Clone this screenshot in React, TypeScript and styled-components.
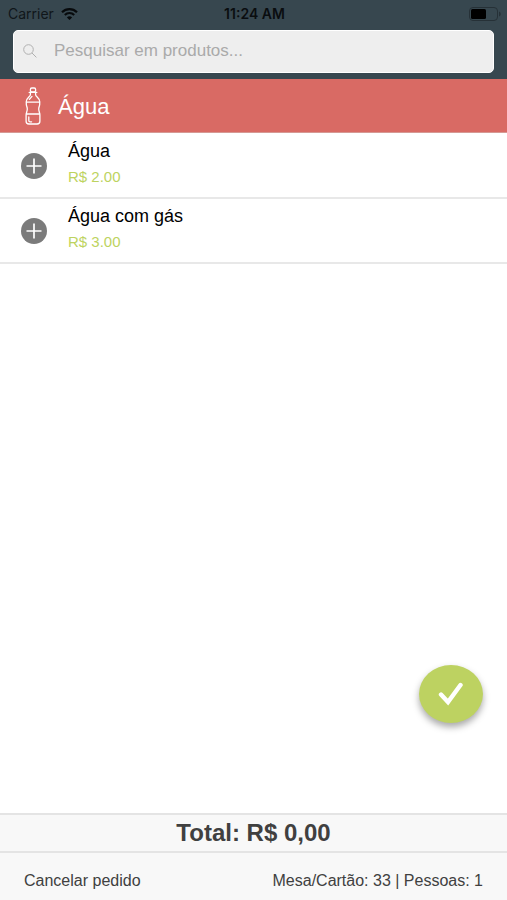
import React from "react";
import styled, { createGlobalStyle } from "styled-components";

const GlobalStyle = createGlobalStyle`
  *, *::before, *::after { box-sizing: border-box; }
  body {
    margin: 0;
    background: #fff;
    font-family: "Liberation Sans", Arial, sans-serif;
    color: #000;
  }
  button, input { font: inherit; }
`;

const Screen = styled.div`
  display: flex;
  flex-direction: column;
  min-height: 100vh;
`;

const TopBar = styled.header`
  background: #37474f;
  padding-bottom: 6px;
`;

const StatusBar = styled.div`
  display: grid;
  grid-template-columns: 1fr auto 1fr;
  align-items: center;
  height: 30px;
  padding: 0 6px 2px 8px;
  font: 400 14px/28px Inter, sans-serif;
  color: #10161a;
`;

const Carrier = styled.div`
  display: flex;
  align-items: center;
  gap: 7px;
`;

const Clock = styled.time`
  font-weight: 600;
  color: #0a0d0f;
`;

const Battery = styled.svg`
  display: block;
  justify-self: end;
`;

const SearchField = styled.label`
  display: flex;
  align-items: center;
  gap: 16px;
  height: 43px;
  margin: 0 13px;
  padding: 0 9px;
  border: 1px solid #fff;
  border-radius: 5px;
  background: #eee;
`;

const SearchInput = styled.input`
  flex: 1;
  min-width: 0;
  padding: 0 0 2px;
  border: 0;
  outline: 0;
  background: transparent;
  font-size: 17px;
  color: #333;
  &::placeholder { color: #aaa; opacity: 1; }
`;

const CategoryBar = styled.div`
  display: flex;
  align-items: center;
  gap: 16px;
  height: 54px;
  padding: 0 24px;
  background: #d96a64;
  border-bottom: 1px solid #d59994;
  color: #fff;
`;

const CategoryTitle = styled.h1`
  margin: 0;
  padding-top: 3px;
  font-size: 22px;
  font-weight: 400;
  line-height: 26px;
`;

const ProductList = styled.ul`
  flex: 1;
  margin: 0;
  padding: 1px 0 0;
  list-style: none;
`;

const ProductRow = styled.li`
  display: flex;
  align-items: center;
  gap: 21px;
  height: 65px;
  padding: 0 21px;
  border-bottom: 2px solid #e8e8e8;
`;

const AddButton = styled.button`
  display: grid;
  place-items: center;
  width: 26px;
  height: 26px;
  padding: 0;
  border: 0;
  border-radius: 50%;
  background: #7b7b7b;
  cursor: pointer;
`;

const ProductInfo = styled.div`
  padding-bottom: 4px;
`;

const ProductName = styled.div`
  font-size: 18px;
  line-height: 26px;
`;

const ProductPrice = styled.div`
  font-size: 15px;
  line-height: 26px;
  color: #bdd360;
`;

const ConfirmButton = styled.button`
  position: fixed;
  right: 24px;
  bottom: 177px;
  display: grid;
  place-items: center;
  width: 64px;
  height: 58px;
  padding: 0;
  border: 0;
  border-radius: 50%;
  background: #bdd261;
  box-shadow: 0 4px 7px rgba(0, 0, 0, 0.34);
  cursor: pointer;
`;

const Footer = styled.footer`
  background: #f8f8f8;
  color: #404040;
`;

const Total = styled.div`
  height: 40px;
  border-top: 2px solid #e4e4e4;
  border-bottom: 2px solid #e4e4e4;
  text-align: center;
  font-size: 24px;
  font-weight: 700;
  line-height: 36px;
`;

const OrderBar = styled.div`
  display: flex;
  align-items: center;
  justify-content: space-between;
  height: 47px;
  padding: 8px 24px 0;
  font-size: 16px;
`;

const CancelButton = styled.button`
  padding: 0;
  border: 0;
  background: none;
  color: inherit;
  cursor: pointer;
`;

const products = [
  { name: "Água", price: "R$ 2.00" },
  { name: "Água com gás", price: "R$ 3.00" },
];

const WifiIcon = () => (
  <svg width="17" height="12" viewBox="0 0 17 12" fill="none" stroke="#070a0c" aria-hidden="true">
    <path d="M1 4.2C5.2.1 11.8.1 16 4.2" strokeWidth="2.2" />
    <path d="M3.8 7C6.4 4.4 10.6 4.4 13.2 7" strokeWidth="2.1" />
    <path d="M8.5 12 5.9 9.4c1.4-1.4 3.8-1.4 5.2 0Z" fill="#070a0c" stroke="none" />
  </svg>
);

const SearchIcon = () => (
  <svg width="15" height="15" viewBox="0 0 15 15" fill="none" stroke="#b0b0b0" strokeWidth="1" aria-hidden="true">
    <circle cx="5.5" cy="5.5" r="4.8" />
    <path d="m9 9 4.4 4.4" />
  </svg>
);

const BottleIcon = () => (
  <svg width="18" height="38" viewBox="0 0 18 38" fill="none" stroke="#fff" strokeWidth="1.3" strokeLinecap="round" strokeLinejoin="round" aria-hidden="true">
    <rect x="6.4" y="1" width="5.2" height="3.8" rx="1.4" />
    <path d="M5.2 5.4h7.6M6.4 5.6v2.2c0 1.8-4.1 3.3-4.1 6.7v3c0 1.3 1 2.5 1 4.5s-1.2 4-1.2 6v6.2c0 2 1 2.8 2.8 2.8h8.2c1.8 0 2.8-.8 2.8-2.8V28c0-2-1.2-4-1.2-6s1-3.2 1-4.5v-3c0-3.4-4.1-4.9-4.1-6.7V5.6" />
    <path d="M2.5 15.2h13M2.5 27h13M8 9.4 5.4 12.4M4.8 30v3.6c0 .8.4 1.2 1.2 1.2h1.6" />
  </svg>
);

export default function App() {
  return (
    <Screen>
      <GlobalStyle />
      <TopBar>
        <StatusBar>
          <Carrier>Carrier <WifiIcon /></Carrier>
          <Clock>11:24 AM</Clock>
          <Battery width="32" height="14" viewBox="0 0 32 14" role="img" aria-label="Bateria">
            <rect x="0.5" y="0.5" width="28" height="13" rx="3.5" fill="none" stroke="#263137" />
            <rect x="2" y="2" width="15" height="10" rx="1.5" fill="#000" />
            <path d="M30 4.5c2.3.8 2.3 4.2 0 5Z" fill="#263137" />
          </Battery>
        </StatusBar>
        <SearchField>
          <SearchIcon />
          <SearchInput type="search" placeholder="Pesquisar em produtos..." aria-label="Pesquisar em produtos" />
        </SearchField>
      </TopBar>
      <CategoryBar>
        <BottleIcon />
        <CategoryTitle>Água</CategoryTitle>
      </CategoryBar>
      <ProductList>
        {products.map((product) => (
          <ProductRow key={product.name}>
            <AddButton type="button" aria-label={`Adicionar ${product.name}`}>
              <svg width="16" height="16" viewBox="0 0 16 16" stroke="#fff" strokeWidth="1.7" aria-hidden="true">
                <path d="M8 .5v15M.5 8h15" />
              </svg>
            </AddButton>
            <ProductInfo>
              <ProductName>{product.name}</ProductName>
              <ProductPrice>{product.price}</ProductPrice>
            </ProductInfo>
          </ProductRow>
        ))}
      </ProductList>
      <ConfirmButton type="button" aria-label="Confirmar pedido">
        <svg width="26" height="24" viewBox="0 0 26 24" fill="none" stroke="#fff" strokeWidth="4.4" strokeLinecap="round" aria-hidden="true">
          <path d="m3 12.5 7 7.5L22.5 3" />
        </svg>
      </ConfirmButton>
      <Footer>
        <Total>Total: R$ 0,00</Total>
        <OrderBar>
          <CancelButton type="button">Cancelar pedido</CancelButton>
          <span>Mesa/Cartão: 33 | Pessoas: 1</span>
        </OrderBar>
      </Footer>
    </Screen>
  );
}
